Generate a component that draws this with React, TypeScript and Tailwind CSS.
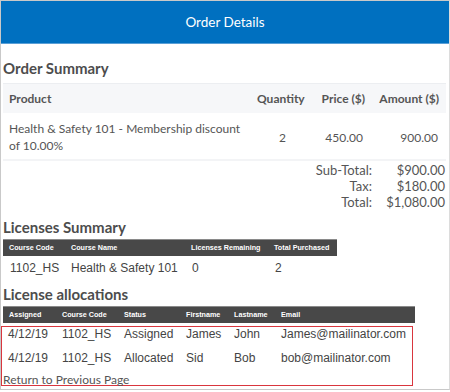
import React from "react";

const totals = [
  { label: "Sub-Total:", value: "$900.00" },
  { label: "Tax:", value: "$180.00" },
  { label: "Total:", value: "$1,080.00" },
];

const allocations = [
  { date: "4/12/19", code: "1102_HS", status: "Assigned", first: "James", last: "John", email: "James@mailinator.com" },
  { date: "4/12/19", code: "1102_HS", status: "Allocated", first: "Sid", last: "Bob", email: "bob@mailinator.com" },
];

function SectionTitle({ children }: { children: React.ReactNode }) {
  return (
    <h2 className="pl-[2px] text-[15px] font-bold leading-[20px] text-[#4d4d4d]">{children}</h2>
  );
}

export default function App() {
  return (
    <div className="w-[450px] h-[392px] bg-white font-['Lato',sans-serif]">
      <div className="h-[390px] border border-[#c9c9c9] border-r-[#dcdcdc] overflow-hidden">
        {/* header */}
        <div className="h-[43px] bg-[#0070c0] border-b border-[#5a9fd6] flex items-center justify-center">
          <span className="text-[13.5px] text-white">Order Details</span>
        </div>

        <div className="pt-[14px]">
          <SectionTitle>Order Summary</SectionTitle>

          {/* order table */}
          <div className="ml-[2px] mr-[3px] mt-[5px] text-[12px] text-[#555]">
            <div className="flex h-[30px] items-center bg-[#f6f7f9] border-t border-[#eceef1] font-bold">
              <div className="flex-1 pl-[6px]">Product</div>
              <div className="w-[63px] pl-[6px]">Quantity</div>
              <div className="w-[59px] text-right pr-[8px]">Price ($)</div>
              <div className="w-[73px] text-right pr-[7px]">Amount ($)</div>
            </div>
            <div className="flex items-center border-b-2 border-[#f3f4f6] pt-[7px] pb-[5px] leading-[17px]">
              <div className="flex-1 pl-[6px]">
                Health &amp; Safety 101 - Membership discount
                <br />
                of 10.00%
              </div>
              <div className="w-[63px] text-center">2</div>
              <div className="w-[59px] text-right pr-[10px]">450.00</div>
              <div className="w-[73px] text-right pr-[8px]">900.00</div>
            </div>
            <div className="pt-[1px] text-[13px] leading-[16px]">
              {totals.map((t) => (
                <div key={t.label} className="flex justify-end">
                  <span className="text-right">{t.label}</span>
                  <span className="w-[74px] pr-[1px] text-right">{t.value}</span>
                </div>
              ))}
            </div>
          </div>

          <div className="mt-[7px]">
            <SectionTitle>Licenses Summary</SectionTitle>
          </div>
          <div className="ml-[2px] mt-[2px] w-[334px] font-['Liberation_Sans',Arial,sans-serif]">
            <div className="flex h-[17px] items-center bg-[#484848] border-t border-[#8a8a8a] text-[7.2px] font-bold text-white">
              <div className="w-[68px] pl-[6px]">Course Code</div>
              <div className="w-[120px]">Course Name</div>
              <div className="w-[83px]">Licenses Remaining</div>
              <div className="flex-1">Total Purchased</div>
            </div>
            <div className="flex h-[24px] items-center text-[12px] text-[#444]">
              <div className="w-[68px] pl-[7px]">1102_HS</div>
              <div className="w-[120px]">Health &amp; Safety 101</div>
              <div className="w-[83px] pl-[1px]">0</div>
              <div className="flex-1 pl-[1px]">2</div>
            </div>
          </div>

          <div className="mt-[4px]">
            <SectionTitle>License allocations</SectionTitle>
          </div>
          <div className="ml-[2px] mt-[2px] w-[412px] font-['Liberation_Sans',Arial,sans-serif]">
            <div className="flex h-[17px] items-center bg-[#484848] border-t border-[#8a8a8a] text-[7.2px] font-bold text-white">
              <div className="w-[59px] pl-[6px]">Assigned</div>
              <div className="w-[62px]">Course Code</div>
              <div className="w-[62px]">Status</div>
              <div className="w-[48px]">Firstname</div>
              <div className="w-[47px]">Lastname</div>
              <div className="flex-1">Email</div>
            </div>
          </div>
          <div className="mt-[3px] w-[412px] h-[60px] border border-[#d9363e]">
            <div className="font-['Liberation_Sans',Arial,sans-serif] text-[12px] leading-[14px] text-[#444]">
              {allocations.map((a) => (
                <div key={a.email} className="flex h-[24px]">
                  <div className="w-[60px] pl-[6px]">{a.date}</div>
                  <div className="w-[62px]">{a.code}</div>
                  <div className="w-[62px]">{a.status}</div>
                  <div className="w-[48px]">{a.first}</div>
                  <div className="w-[47px]">{a.last}</div>
                  <div className="flex-1">{a.email}</div>
                </div>
              ))}
            </div>
            <a className="block pl-[1px] text-[12px] leading-[9px] text-[#555]">Return to Previous Page</a>
          </div>
        </div>
      </div>
    </div>
  );
}
